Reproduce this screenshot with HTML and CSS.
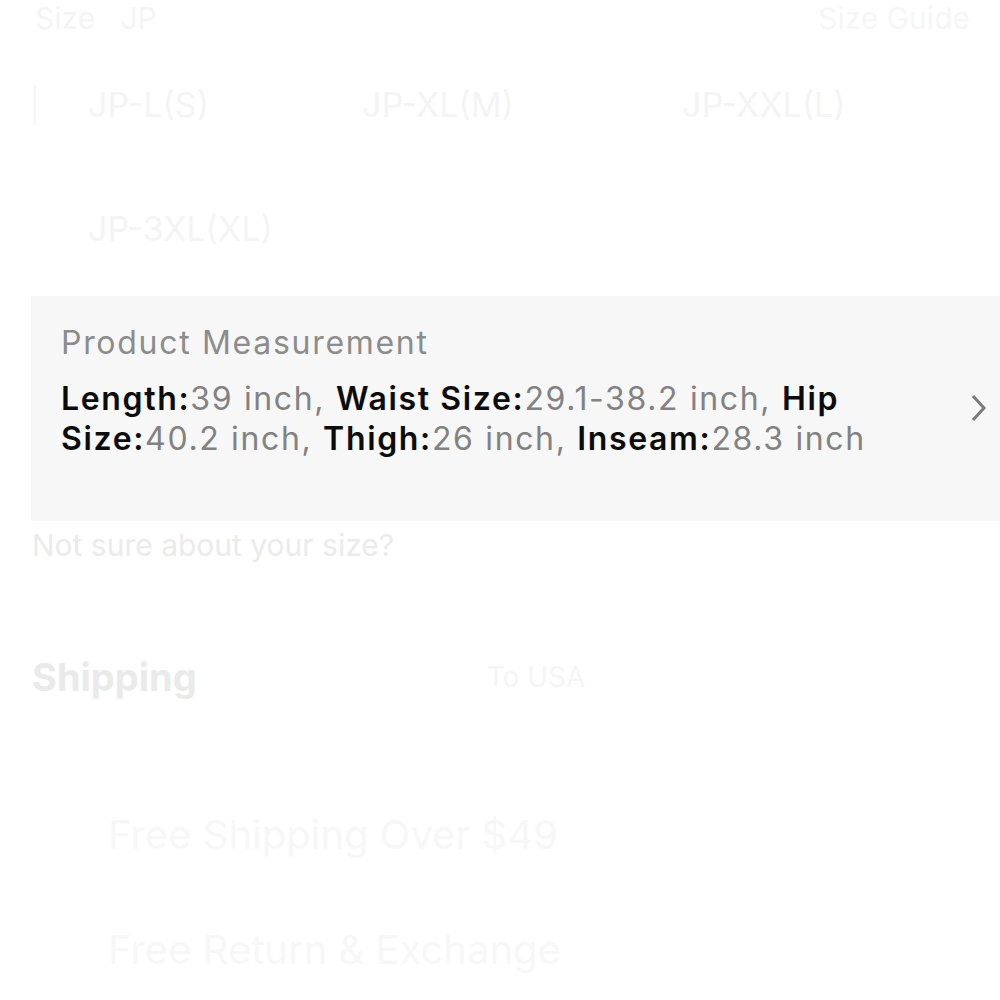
FILE: index.html
```html
<!DOCTYPE html>
<html>
<head>
<meta charset="utf-8">
<link rel="stylesheet" href="styles.css">
</head>
<body>
<div class="page">
  <div class="faded top-row">
    <div class="size-label">Size&nbsp;&nbsp; JP</div>
    <div class="size-guide">Size Guide</div>
  </div>
  <div class="faded sizes">
    <div class="size-chip selected">JP-L(S)</div>
    <div class="size-chip">JP-XL(M)</div>
    <div class="size-chip">JP-XXL(L)</div>
    <div class="size-chip">JP-3XL(XL)</div>
  </div>
  <div class="measure">
    <div class="measure-text">
      <div class="measure-title">Product Measurement</div>
      <p class="measure-body"><b>Length:</b>39 inch, <b>Waist Size:</b>29.1-38.2 inch, <b>Hip Size:</b>40.2 inch, <b>Thigh:</b>26 inch, <b>Inseam:</b>28.3 inch</p>
    </div>
    <svg class="chev" width="20" height="30" viewBox="0 0 20 30"><path d="M5 2 L16 14 L5 26" fill="none" stroke="#7b7b7b" stroke-width="3"/></svg>
  </div>
  <div class="faded not-sure">Not sure about your size?</div>
  <div class="faded shipping">
    <span class="ship-title">Shipping</span>
    <span class="ship-to">To USA</span>
  </div>
  <div class="faded ship-line">Free Shipping Over $49</div>
  <div class="faded ship-line">Free Return &amp; Exchange</div>
</div>
</body>
</html>
```

FILE: styles.css
```css
html, body {
  margin: 0;
  padding: 0;
  background: #ffffff;
}
body {
  font-family: Inter, "Liberation Sans", Arial, sans-serif;
  width: 1000px;
  height: 1000px;
  overflow: hidden;
}
.page {
  display: flex;
  flex-direction: column;
}
.faded {
  color: #f4f4f4;
}
.top-row {
  display: flex;
  justify-content: space-between;
  padding: 0 30px 0 35px;
  font-size: 30px;
  height: 40px;
  line-height: 36px;
}
.size-guide { color: #f6f6f6; }
.sizes {
  display: grid;
  grid-template-columns: 274px 320px 300px;
  row-gap: 37px;
  padding: 45px 0 0 34px;
  font-size: 34px;
  line-height: 40px;
  height: 256px;
  box-sizing: border-box;
}
.size-chip {
  padding: 0 0 0 54px;
  height: 40px;
}
.size-chip.selected {
  border-left: 2px solid #f5f5f5;
  padding-left: 52px;
}
.measure {
  margin-left: 31px;
  background: #f7f7f7;
  height: 225px;
  display: flex;
  align-items: center;
  padding: 27px 12px 0 30px;
  box-sizing: border-box;
}
.measure-text {
  flex: 1;
  align-self: flex-start;
}
.measure-title {
  color: #8c8c8c;
  font-size: 32px;
  line-height: 40px;
  letter-spacing: 1.7px;
  margin-bottom: 16px;
}
.measure-body {
  margin: 0;
  font-size: 32px;
  line-height: 40px;
  letter-spacing: 1.65px;
  color: #828282;
  width: 860px;
}
.measure-body b {
  font-weight: 600;
  color: #0c0c0c;
}
.chev {
  margin-top: -27px;
}
.not-sure {
  padding: 4px 0 0 32px;
  font-size: 30px;
  line-height: 40px;
  height: 132px;
  color: #ebebeb;
}
.shipping {
  display: flex;
  font-size: 38px;
  line-height: 40px;
  height: 158px;
  padding-left: 32px;
  gap: 290px;
}
.ship-title { color: #eaeaea; font-weight: 700; }
.ship-to { font-size: 28px; color: #f5f5f5; }
.ship-line {
  padding: 0 0 0 108px;
  font-size: 40px;
  height: 115px;
  line-height: 40px;
  color: #f7f7f7;
}
```
